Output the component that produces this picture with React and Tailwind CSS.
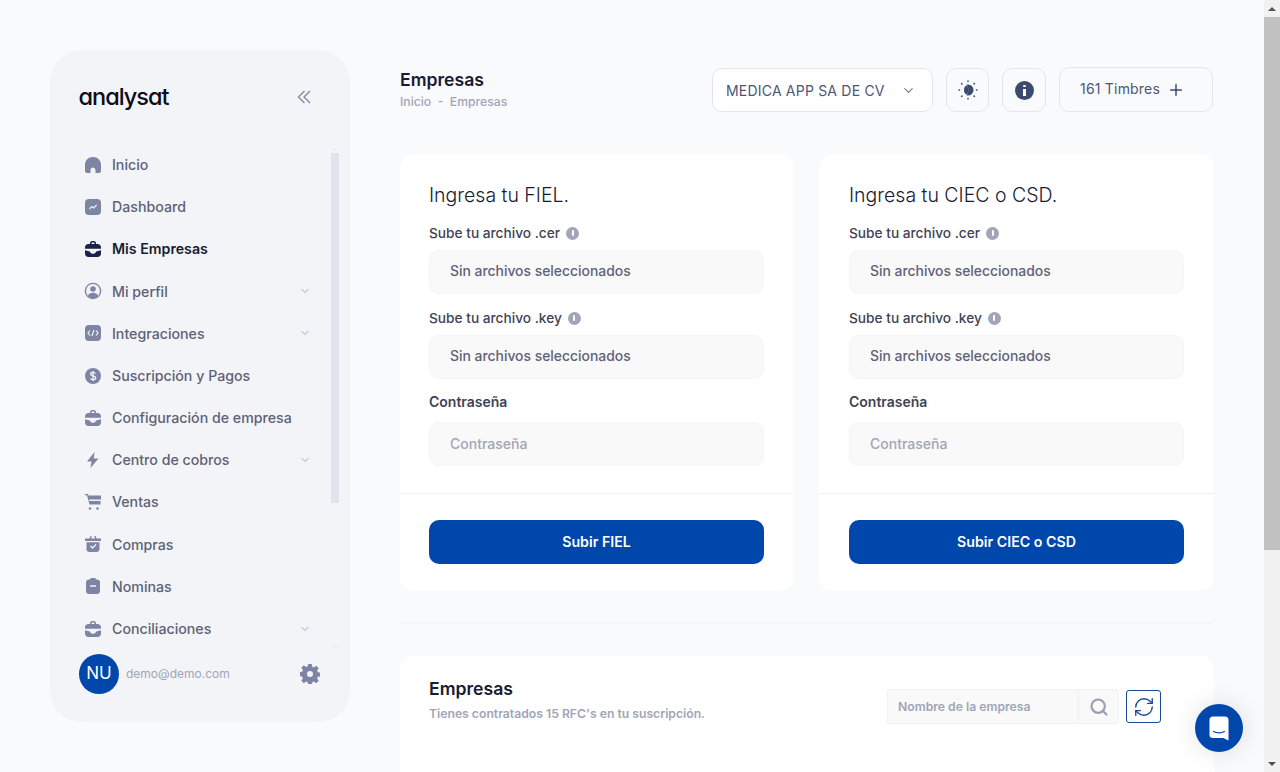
import { ChevronDown, Plus, RefreshCw, Search } from 'lucide-react';

const font = { fontFamily: 'Inter, "Liberation Sans", sans-serif' };

const Home = (p) => (
  <svg viewBox="0 0 18 18" {...p}><path fill="currentColor" d="M1 8.500C1 4.500 4.500 1 9 1s8 3.500 8 7.500V15c0 1.100-.9 2-2 2h-3.500v-3a2.500 2.500 0 0 0-5 0v3H3c-1.100 0-2-.9-2-2z" /></svg>
);
const Dash = (p) => (
  <svg viewBox="0 0 18 18" {...p}><rect x="1" y="1" width="16" height="16" rx="4" fill="currentColor" /><path d="M5.500 11l2.300-2.400 1.800 1.400 3-3" fill="none" stroke="#f3f4f8" strokeWidth="1.100" /></svg>
);
const Case = (p) => (
  <svg viewBox="0 0 18 18" {...p}><path fill="currentColor" d="M6 4V3c0-1 .8-2 2-2h2c1.200 0 2 1 2 2v1h1.500C15.500 4 17 5.500 17 7.500V8.800H1V7.500C1 5.500 2.500 4 4.500 4zm1.500 0h3V3c0-.3-.2-.5-.5-.5H8c-.3 0-.5.2-.5.5zM1 10.200l4.800 1.200c.6 1.700 1.800 2.400 3.200 2.400s2.600-.7 3.200-2.400L17 10.200v3.300c0 2-1.500 3.500-3.500 3.500h-9C2.500 17 1 15.500 1 13.500z" /></svg>
);
const Profile = (p) => (
  <svg viewBox="0 0 18 18" {...p}><circle cx="9" cy="9" r="7.600" fill="none" stroke="currentColor" strokeWidth="1.400" /><circle cx="9" cy="7" r="2.800" fill="currentColor" /><path fill="currentColor" d="M3.800 14c.8-2 2.800-3.200 5.200-3.200s4.400 1.200 5.200 3.200C13 15.600 11 16.500 9 16.500S5 15.600 3.800 14z" /></svg>
);
const Code = (p) => (
  <svg viewBox="0 0 18 18" {...p}><rect x="1" y="1" width="16" height="16" rx="4" fill="currentColor" /><path d="M6 6.500L4 9l2 2.500M12 6.500L14 9l-2 2.500M10 6l-2 6" fill="none" stroke="#f3f4f8" strokeWidth="1.200" /></svg>
);
const Dollar = (p) => (
  <svg viewBox="0 0 18 18" {...p}><circle cx="9" cy="9" r="8" fill="currentColor" /><path d="M11.500 6.500C11 5.700 10 5.300 9 5.300c-1.400 0-2.500.7-2.500 1.800C6.500 9.600 11.700 8.400 11.700 11c0 1.100-1.200 1.800-2.700 1.800-1.100 0-2.100-.5-2.600-1.300M9 4v10" fill="none" stroke="#f3f4f8" strokeWidth="1.300" /></svg>
);
const Bolt = (p) => (
  <svg viewBox="0 0 18 18" {...p}><path fill="currentColor" d="M10.500 1L3 10.500h4.500L6.500 17l8-9.500h-4.800z" /></svg>
);
const Cart = (p) => (
  <svg viewBox="0 0 18 18" {...p}><path fill="currentColor" d="M1 1h2.800l.7 1.500h12.500v4H5l.3 1.500H16.500v3.500H5.500L3 2.200H1z" /><circle cx="6" cy="15.500" r="1.300" fill="currentColor" /><circle cx="13.500" cy="15.500" r="1.300" fill="currentColor" /></svg>
);
const Basket = (p) => (
  <svg viewBox="0 0 18 18" {...p}><path fill="currentColor" d="M1 3.500h4.500L6.500 1h1.300l-.8 2.500h4l-.8-2.500h1.300l1 2.500H17V6H1zM2.500 7.200h13V14c0 1.700-1.300 3-3 3h-7c-1.700 0-3-1.300-3-3z" /><path d="M6.500 11l2 2 3.500-3.500" fill="none" stroke="#f3f4f8" strokeWidth="1.300" /></svg>
);
const Clip = (p) => (
  <svg viewBox="0 0 18 18" {...p}><path fill="currentColor" d="M6 2.500C6 1.700 6.700 1 7.500 1h3c.8 0 1.500.7 1.500 1.500H13c1.700 0 3 1.300 3 3V14c0 1.700-1.300 3-3 3H5c-1.700 0-3-1.300-3-3V5.500c0-1.700 1.300-3 3-3z" /><path d="M6 9h6" stroke="#f3f4f8" strokeWidth="1.500" /></svg>
);
const Gear = (p) => (
  <svg viewBox="0 0 20 20" {...p}><path fill="currentColor" fillRule="evenodd" d="M8.200 0h3.600l.5 2.700 1.600.7 2.300-1.600 2.500 2.500-1.600 2.300.7 1.600 2.700.5v3.600l-2.700.5-.7 1.600 1.600 2.300-2.500 2.500-2.300-1.600-1.600.7-.5 2.700H8.200l-.5-2.700-1.600-.7-2.300 1.600-2.500-2.500 1.600-2.300-.7-1.600L-.5 11.800V8.200l2.700-.5.700-1.600-1.600-2.300 2.500-2.500 2.300 1.600 1.600-.7zM10 7a3 3 0 1 0 0 6 3 3 0 0 0 0-6z" /></svg>
);
const Info = ({ className }) => (
  <span className={`flex items-center justify-center rounded-full bg-[#a1a5b7] text-white ${className}`}>
    <span className="block h-[6px] w-[2px] rounded-sm bg-white" />
  </span>
);

const navItems = [
  { label: 'Inicio', icon: Home },
  { label: 'Dashboard', icon: Dash },
  { label: 'Mis Empresas', icon: Case, active: true },
  { label: 'Mi perfil', icon: Profile, chevron: true },
  { label: 'Integraciones', icon: Code, chevron: true },
  { label: 'Suscripción y Pagos', icon: Dollar },
  { label: 'Configuración de empresa', icon: Case },
  { label: 'Centro de cobros', icon: Bolt, chevron: true },
  { label: 'Ventas', icon: Cart },
  { label: 'Compras', icon: Basket },
  { label: 'Nominas', icon: Clip },
  { label: 'Conciliaciones', icon: Case, chevron: true },
];

function FileField({ label }) {
  return (
    <>
      <div className="flex h-[18px] items-center gap-[6px] pt-[2px] text-[13.700px] font-medium text-[#3f4254]">
        {label}
        <Info className="h-[13px] w-[13px]" />
      </div>
      <div className="mt-[9px] mb-[14px] flex h-[44px] items-center rounded-[10px] border border-[#f5f5f7] bg-[#f9f9f9] px-[20px] pb-[1px] text-[13.900px] font-medium text-[#5e6278]">
        Sin archivos seleccionados
      </div>
    </>
  );
}

function UploadCard({ title, button, padding }) {
  return (
    <div className="h-[437px] rounded-[14px] bg-white">
      <div className={`h-[340px] border-b border-[#eff2f5] pt-[27px] ${padding}`}>
        <h3 className="text-[19.500px] leading-[28px] font-light text-[#181c32]">{title}</h3>
        <div className="mt-[14px]">
          <FileField label="Sube tu archivo .cer" />
          <FileField label="Sube tu archivo .key" />
        </div>
        <div className="text-[14px] leading-[18px] font-semibold text-[#3f4254]">Contraseña</div>
        <div className="mt-[11px] flex h-[44px] items-center rounded-[10px] border border-[#f5f5f7] bg-[#f9f9f9] px-[20px] pb-[1px] text-[14px] font-medium text-[#a1a5b7]">
          Contraseña
        </div>
      </div>
      <div className={`pt-[26px] ${padding}`}>
        <button className="h-[44px] w-full rounded-[10px] bg-[#0047ab] pb-[1px] text-[14.200px] font-semibold text-white">{button}</button>
      </div>
    </div>
  );
}

export default function App() {
  return (
    <div style={font} className="relative flex h-[772px] w-[1280px] overflow-hidden bg-[#f9fafc]">
      <div className="flex flex-1 gap-[50px] pl-[50px]">
        {/* Sidebar */}
        <aside className="relative mt-[50px] flex h-[672px] w-[300px] flex-col rounded-[32px] bg-[#f3f4f7]">
          <div className="flex h-[93px] items-center justify-between pr-[39px] pl-[28.500px]">
            <span className="text-[23.500px] font-medium tracking-[-1px] text-[#0b0d17] [font-feature-settings:'cv11']">analysat</span>
            <svg viewBox="0 0 14 14" className="h-[14px] w-[14px] text-[#8a8fa8]">
              <path d="M7.500 1L1.500 7l6 6M13 1L7 7l6 6" fill="none" stroke="currentColor" strokeWidth="1.500" />
            </svg>
          </div>
          <nav className="h-[505px] overflow-hidden pt-[0.500px] pr-[39px] pl-[34px]">
            {navItems.map((item) => {
              const Icon = item.icon;
              return (
                <div key={item.label} className="flex h-[42.200px] items-center">
                  <Icon className={`h-[18px] w-[18px] ${item.active ? 'text-[#1a2149]' : 'text-[#7e84a3]'}`} />
                  <span className={`ml-[10px] flex-1 text-[14.200px] ${item.active ? 'font-semibold text-[#181c32]' : 'font-medium text-[#5e6278]'}`}>{item.label}</span>
                  {item.chevron && <ChevronDown className="h-[12px] w-[12px] text-[#a1a5b7]" />}
                </div>
              );
            })}
          </nav>
          {/* nav scrollbar */}
          <div className="absolute top-[99px] left-[283px] h-[1px] w-[4px] bg-[#dfe3ee]" />
          <div className="absolute top-[103px] left-[281px] h-[350px] w-[8px] bg-[#dfe3ee]" />
          <div className="absolute top-[596px] left-[283px] h-[1px] w-[4px] bg-[#dfe3ee]" />
          <div className="mt-[6px] flex items-center pr-[30px] pl-[29px]">
            <div className="flex h-[40px] w-[40px] items-center justify-center rounded-full bg-[#0047ab] text-[17px] text-white">NU</div>
            <span className="ml-[7px] flex-1 text-[12px] text-[#a1a5b7]">demo@demo.com</span>
            <Gear className="h-[20px] w-[20px] text-[#7e84a3]" />
          </div>
        </aside>

        {/* Main */}
        <main className="w-[814px] pt-[67px]">
          <header className="flex h-[45px] items-start justify-between pr-[1px]">
            <div>
              <h1 className="mt-[1px] text-[17.600px] leading-[24px] font-semibold text-[#181c32]">Empresas</h1>
              <p className="mt-[1px] text-[12.200px] leading-[18px] font-medium text-[#a1a5b7]">Inicio&nbsp; -&nbsp; Empresas</p>
            </div>
            <div className="flex items-start">
              <div className="mt-[1px] flex h-[44px] w-[221px] items-center justify-between rounded-[10px] border border-[#e4e6ef] bg-white pr-[16px] pl-[13px] text-[14px] font-normal tracking-[0.2px] text-[#4b5675]">
                MEDICA APP SA DE CV
                <ChevronDown className="h-[15px] w-[15px] text-[#7e8299]" />
              </div>
              <div className="mt-[1px] ml-[13px] flex h-[44px] w-[43px] items-center justify-center rounded-[10px] border border-[#e4e6ef]">
                <svg viewBox="0 0 20 20" className="h-[20px] w-[20px] text-[#3b4a6e]">
                  <path fill="currentColor" d="M10 4.500a5.500 5.500 0 1 1 0 11c-1 0-1.500-.3-1.500-.3 1.200-1.200 1.800-3 1.800-5.200s-.6-4-1.800-5.200c0 0 .5-.3 1.500-.3zM8.700 5.500C7 6 6 7.800 6 10s1 4 2.700 4.500c1-1 1.500-2.600 1.500-4.500S9.700 6.500 8.700 5.500z" />
                  <path stroke="currentColor" strokeWidth="1.500" strokeLinecap="round" d="M10 1v.5M10 18.500v.5M1 10h.5M18.500 10h.5M3.600 3.600l.4.4M16 16l.4.4M16.400 3.600L16 4M4 16l-.4.4" />
                </svg>
              </div>
              <div className="mt-[1px] ml-[13px] flex h-[44px] w-[44px] items-center justify-center rounded-[10px] border border-[#e4e6ef]">
                <span className="relative block h-[19px] w-[19px] rounded-full bg-[#3b4a6e]">
                  <span className="absolute top-[4px] left-[8.500px] h-[2.500px] w-[2.500px] rounded-full bg-white" />
                  <span className="absolute top-[8px] left-[8.500px] h-[7px] w-[2.500px] bg-white" />
                </span>
              </div>
              <div className="ml-[13px] flex h-[45px] w-[154px] items-center gap-[7px] rounded-[10px] border border-[#e4e6ef] pb-[2px] pl-[20px] text-[14px] font-normal tracking-[0.2px] text-[#4b5675]">
                161 Timbres
                <Plus className="mt-[2px] h-[18px] w-[18px] text-[#3b4a6e]" strokeWidth={2} />
              </div>
            </div>
          </header>

          <section className="mt-[42px] grid grid-cols-[394px_395px] gap-[25px]">
            <UploadCard title="Ingresa tu FIEL." button="Subir FIEL" padding="pr-[30px] pl-[29px]" />
            <UploadCard title="Ingresa tu CIEC o CSD." button="Subir CIEC o CSD" padding="px-[30px]" />
          </section>

          <hr className="mt-[32px] border-[#f4f5f8]" />

          <section className="mt-[32px] flex h-[200px] items-start justify-between rounded-[14px] bg-white pt-[21px] pr-[53px] pl-[29px]">
            <div>
              <h2 className="text-[17.600px] leading-[24px] font-semibold text-[#181c32]">Empresas</h2>
              <p className="mt-[4px] text-[12.200px] leading-[18px] font-semibold text-[#a1a5b7]">Tienes contratados 15 RFC's en tu suscripción.</p>
            </div>
            <div className="mt-[12px] flex items-center gap-[7px]">
              <div className="flex h-[35px] w-[232px] items-center rounded-[3px] border border-[#f1f2f6] bg-[#f9f9f9]">
                <span className="flex-1 pt-[1px] pl-[10px] text-[12.200px] font-semibold text-[#a1a5b7]">Nombre de la empresa</span>
                <span className="flex h-full w-[40px] items-center justify-center border-l border-[#eff0f4]">
                  <Search className="h-[20px] w-[20px] text-[#9a9eaf]" strokeWidth={2.6} />
                </span>
              </div>
              <div className="flex h-[33px] w-[35px] items-center justify-center rounded-[3px] border border-[#1a4a96]">
                <RefreshCw className="h-[22px] w-[22px] text-[#1a4a96]" strokeWidth={1.5} />
              </div>
            </div>
          </section>
        </main>
      </div>

      {/* Page scrollbar */}
      <div className="flex w-[16px] flex-col items-center bg-[#f1f1f1]">
        <div className="flex h-[17px] items-center justify-center">
          <div className="h-0 w-0 border-x-[4px] border-b-[4px] border-x-transparent border-b-[#505050]" />
        </div>
        <div className="h-[533px] w-full bg-[#c1c1c1]" />
        <div className="flex-1" />
        <div className="flex h-[17px] items-center justify-center">
          <div className="h-0 w-0 border-x-[4px] border-t-[4px] border-x-transparent border-t-[#505050]" />
        </div>
      </div>

      {/* Chat launcher */}
      <button className="absolute top-[704px] left-[1195px] flex h-[48px] w-[48px] items-center justify-center rounded-full bg-[#0047ab] shadow-[0_0_24px_rgba(0,0,0,0.12)]">
        <svg viewBox="3 1.500 18 21" className="h-[25px] w-[22px]">
          <path fill="#fff" d="M4 5a3 3 0 0 1 3-3h10a3 3 0 0 1 3 3v17l-4.500-2H7a3 3 0 0 1-3-3z" />
          <path d="M7.500 14.500c2.500 1.500 6.500 1.500 9 0" fill="none" stroke="#0047ab" strokeWidth="1.100" strokeLinecap="round" />
        </svg>
      </button>
    </div>
  );
}
